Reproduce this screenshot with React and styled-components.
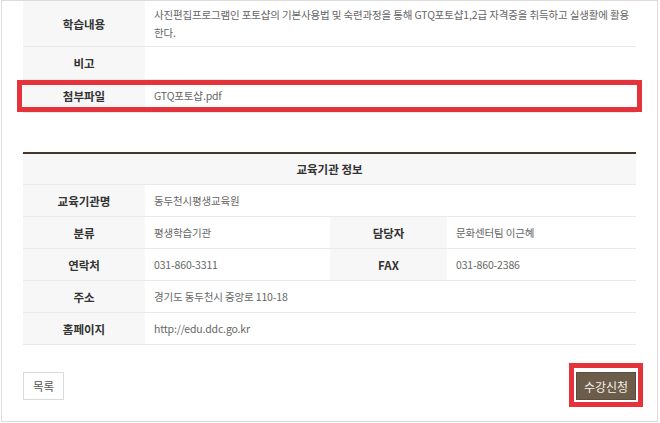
import React from 'react';
import styled, { createGlobalStyle } from 'styled-components';

const GlobalStyle = createGlobalStyle`
  html, body {
    margin: 0;
    padding: 0;
    background: #fff;
  }
  body {
    font-family: "Noto Sans CJK KR", "Noto Sans", sans-serif;
    color: #333;
  }
`;

const courseRows = [
  {
    label: '학습내용',
    value: '사진편집프로그램인 포토샵의 기본사용법 및 숙련과정을 통해 GTQ포토샵1,2급 자격증을 취득하고 실생활에 활용 한다.',
    tall: true,
  },
  { label: '비고', value: '' },
  { label: '첨부파일', value: 'GTQ포토샵.pdf', highlight: true },
];

const orgRows = [
  [{ label: '교육기관명', value: '동두천시평생교육원' }],
  [
    { label: '분류', value: '평생학습기관' },
    { label: '담당자', value: '문화센터팀 이근혜' },
  ],
  [
    { label: '연락처', value: '031-860-3311' },
    { label: 'FAX', value: '031-860-2386' },
  ],
  [{ label: '주소', value: '경기도 동두천시 중앙로 110-18' }],
  [{ label: '홈페이지', value: 'http://edu.ddc.go.kr' }],
];

function App() {
  return (
    <>
      <GlobalStyle />
      <Frame>
        <InfoTable>
          {courseRows.map((row) => (
            <Row key={row.label} $tall={row.tall} $highlight={row.highlight}>
              <Label>{row.label}</Label>
              <Value $tall={row.tall}>{row.value}</Value>
            </Row>
          ))}
        </InfoTable>

        <OrgTable>
          <Caption>교육기관 정보</Caption>
          {orgRows.map((cells) => (
            <Row key={cells[0].label} $org $split={cells.length > 1}>
              {cells.map((cell) => (
                <React.Fragment key={cell.label}>
                  <Label>{cell.label}</Label>
                  <Value>{cell.value}</Value>
                </React.Fragment>
              ))}
            </Row>
          ))}
        </OrgTable>

        <Actions>
          <ListButton type="button">목록</ListButton>
          <ApplyWrap>
            <ApplyButton type="button">수강신청</ApplyButton>
          </ApplyWrap>
        </Actions>
      </Frame>
    </>
  );
}

export default App;

const Frame = styled.div`
  box-sizing: border-box;
  width: 657px;
  height: 422px;
  margin-left: 1px;
  padding: 0 21px;
  border: 1px solid #dcdcdc;
`;

const InfoTable = styled.div`
  display: flex;
  flex-direction: column;
`;

const OrgTable = styled.div`
  display: flex;
  flex-direction: column;
  margin-top: 39px;
  border-top: 2px solid #45372a;
`;

const Caption = styled.div`
  height: 30px;
  line-height: 30px;
  text-align: center;
  background: #f7f7f7;
  border-bottom: 1px solid #e9e9e9;
  font-size: 11.5px;
  font-weight: 700;
  color: #333;
`;

const Row = styled.div`
  position: relative;
  display: grid;
  grid-template-columns: ${(p) => (p.$split ? '122px 185px 117px 1fr' : '122px 1fr')};
  min-height: ${(p) => (p.$tall ? '45px' : p.$org ? '31px' : '32px')};
  border-bottom: 1px solid #e9e9e9;

  ${(p) =>
    p.$highlight &&
    `
    &::after {
      content: '';
      position: absolute;
      top: 0;
      bottom: 0;
      left: -6px;
      right: -6px;
      border: 5px solid #e5333b;
      pointer-events: none;
    }
  `}
`;

const Label = styled.div`
  display: flex;
  align-items: center;
  justify-content: center;
  background: #f7f7f7;
  font-size: 11.5px;
  font-weight: 700;
  color: #333;
`;

const Value = styled.div`
  display: flex;
  align-items: center;
  padding: ${(p) => (p.$tall ? '5px 2px 4px 9px' : '0 6px 0 9px')};
  font-size: 10.5px;
  letter-spacing: -0.15px;
  line-height: 18px;
  word-break: keep-all;
  color: #666;
`;

const Actions = styled.div`
  display: flex;
  justify-content: space-between;
  align-items: center;
  margin-top: 27px;
`;

const ListButton = styled.button`
  box-sizing: border-box;
  width: 41px;
  height: 28px;
  padding: 0;
  background: #fff;
  border: 1px solid #dadada;
  font-family: inherit;
  font-size: 11.5px;
  color: #555;
  cursor: pointer;
`;

const ApplyWrap = styled.div`
  position: relative;
  display: flex;

  &::after {
    content: '';
    position: absolute;
    top: -9px;
    bottom: -7px;
    left: -7px;
    right: -7px;
    border: 5px solid #e5333b;
    pointer-events: none;
  }
`;

const ApplyButton = styled.button`
  box-sizing: border-box;
  width: 60px;
  height: 28px;
  padding: 0;
  background: #6c5d4b;
  border: 1px solid #5b4d3d;
  font-family: inherit;
  font-size: 12px;
  color: #f4efe8;
  cursor: pointer;
`;
